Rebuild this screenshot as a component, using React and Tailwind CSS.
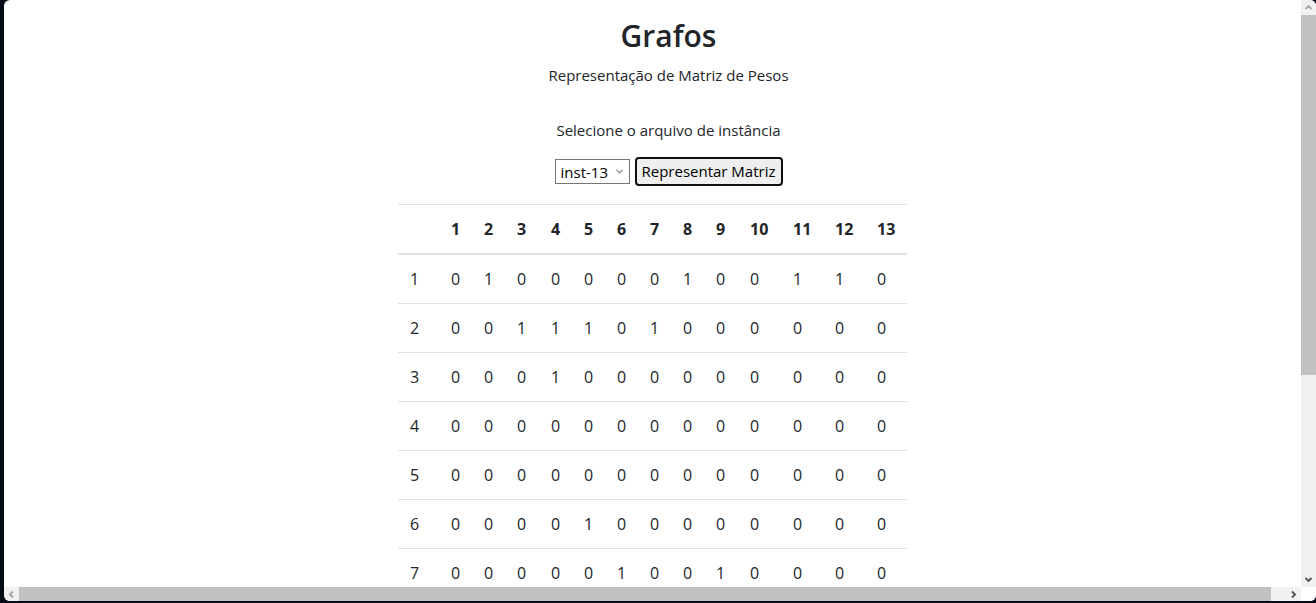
import React from "react";

const matrix = [
  [0, 1, 0, 0, 0, 0, 0, 1, 0, 0, 1, 1, 0],
  [0, 0, 1, 1, 1, 0, 1, 0, 0, 0, 0, 0, 0],
  [0, 0, 0, 1, 0, 0, 0, 0, 0, 0, 0, 0, 0],
  [0, 0, 0, 0, 0, 0, 0, 0, 0, 0, 0, 0, 0],
  [0, 0, 0, 0, 0, 0, 0, 0, 0, 0, 0, 0, 0],
  [0, 0, 0, 0, 1, 0, 0, 0, 0, 0, 0, 0, 0],
  [0, 0, 0, 0, 0, 1, 0, 0, 1, 0, 0, 0, 0],
  [0, 0, 0, 0, 0, 0, 0, 0, 0, 1, 0, 0, 0],
  [0, 0, 0, 0, 0, 0, 0, 0, 0, 0, 0, 0, 1],
  [0, 0, 0, 0, 0, 0, 0, 0, 0, 0, 0, 0, 0],
  [0, 0, 0, 0, 0, 0, 0, 0, 0, 0, 0, 1, 0],
  [0, 0, 0, 0, 0, 0, 0, 0, 0, 0, 0, 0, 0],
  [0, 0, 0, 0, 0, 0, 0, 0, 0, 0, 0, 0, 0],
];

const colWidths = [
  "w-[41px]", "w-[33px]", "w-[33px]", "w-[34px]", "w-[33px]", "w-[33px]", "w-[33px]",
  "w-[33px]", "w-[33px]", "w-[34px]", "w-[43px]", "w-[42px]", "w-[42px]", "w-[42px]",
];

const Chevron = ({ dir, light }) => {
  const pts = {
    up: "1.5,6 4.5,3 7.5,6",
    down: "1.5,3 4.5,6 7.5,3",
    left: "6,1.5 3,4.5 6,7.5",
    right: "3,1.5 6,4.5 3,7.5",
  }[dir];
  return (
    <svg width="9" height="9" viewBox="0 0 9 9">
      <polyline points={pts} fill="none" stroke={light ? "#a3a3a3" : "#505050"} strokeWidth="1.8" />
    </svg>
  );
};

const App = () => {
  return (
    <div className="h-[603px] w-[1316px] bg-[#070b16] pl-1 pb-[2px] overflow-hidden font-['Open_Sans',sans-serif] text-[#212529]">
      <div className="h-full flex flex-col rounded-[6px] bg-white overflow-hidden">
        <div className="flex flex-1 min-h-0">
          <div className="flex-1 overflow-hidden">
            <div className="w-[1329px] text-center">
              <h1 className="mt-[18px] mb-[9px] text-[30px] leading-[36px] font-semibold">Grafos</h1>
              <p className="text-[15px] leading-6">Representação de Matriz de Pesos</p>
              <p className="mt-[31px] text-[15px] leading-6">Selecione o arquivo de instância</p>
              <div className="mt-[15px] flex justify-center items-center gap-[5px] h-[29px]">
                <div className="relative">
                  <select className="appearance-none w-[75px] h-[25px] border border-[#767676] bg-white pl-[5px] text-[15px] leading-5 text-black">
                    <option>inst-13</option>
                  </select>
                  <span className="pointer-events-none absolute right-[6px] top-[8px]">
                    <svg width="9" height="9" viewBox="0 0 9 9">
                      <polyline points="1.5,3 4.5,6 7.5,3" fill="none" stroke="#8a8a8a" strokeWidth="1.2" />
                    </svg>
                  </span>
                </div>
                <button className="w-[148px] h-[29px] border-2 border-[#101010] rounded-[4px] bg-[#efefef] text-[15px] text-black">
                  Representar Matriz
                </button>
              </div>
            </div>
            <table className="mt-[18px] mx-auto w-[509px] table-fixed border-collapse text-base leading-6 text-left">
              <colgroup>
                {colWidths.map((w, i) => (
                  <col key={i} className={w} />
                ))}
              </colgroup>
              <thead>
                <tr className="border-t border-[#dee2e6] border-b-2">
                  <th className="p-3 font-bold"></th>
                  {matrix.map((_, i) => (
                    <th key={i} className="p-3 font-bold">{i + 1}</th>
                  ))}
                </tr>
              </thead>
              <tbody>
                {matrix.map((row, r) => (
                  <tr key={r} className="border-b border-[#dee2e6]">
                    <td className="p-3">{r + 1}</td>
                    {row.map((v, c) => (
                      <td key={c} className="p-3">{v}</td>
                    ))}
                  </tr>
                ))}
              </tbody>
            </table>
          </div>
          <div className="w-[15px] flex flex-col bg-[#f1f1f1]">
            <div className="h-[15px] flex items-center justify-center">
              <Chevron dir="up" light />
            </div>
            <div className="h-[360px] bg-[#c1c1c1]"></div>
            <div className="flex-1"></div>
            <div className="h-[15px] flex items-center justify-center">
              <Chevron dir="down" />
            </div>
          </div>
        </div>
        <div className="h-[14px] flex">
          <div className="flex-1 flex bg-[#f1f1f1]">
            <div className="w-[15px] flex items-center justify-center">
              <Chevron dir="left" light />
            </div>
            <div className="w-[1252px] bg-[#c1c1c1]"></div>
            <div className="flex-1"></div>
            <div className="w-[15px] flex items-center justify-center">
              <Chevron dir="right" />
            </div>
          </div>
          <div className="w-[15px] bg-white"></div>
        </div>
      </div>
    </div>
  );
};

export default App;
